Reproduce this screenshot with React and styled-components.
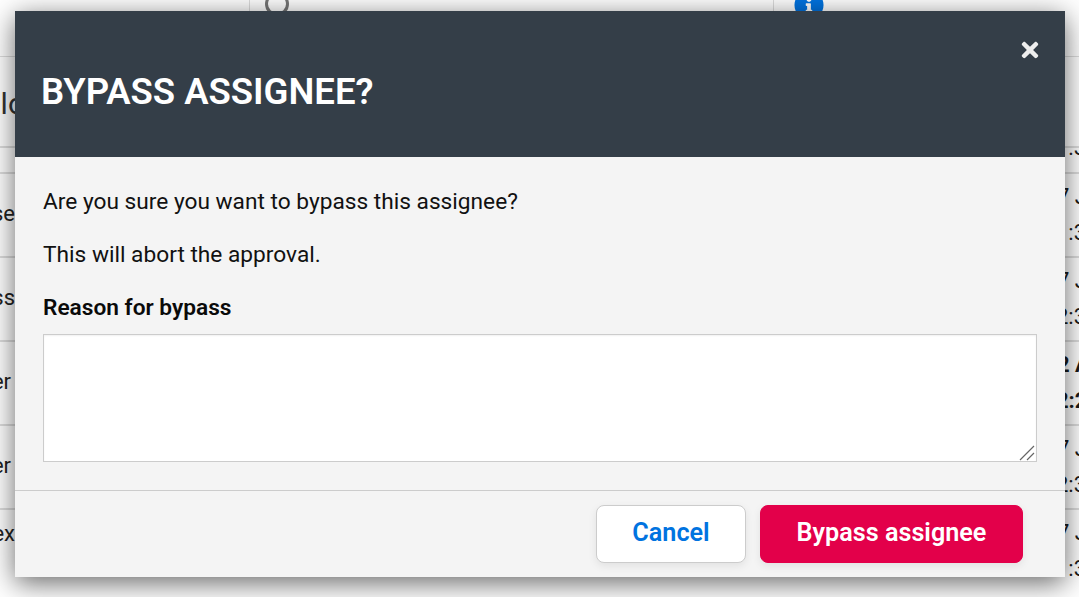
import React from "react";
import styled, { createGlobalStyle } from "styled-components";
import { FaTimes, FaInfoCircle } from "react-icons/fa";

const Global = createGlobalStyle`
  html, body {
    margin: 0;
    padding: 0;
    height: 100%;
    overflow: hidden;
    background: #fff;
    font-family: Roboto, "Liberation Sans", sans-serif;
  }
  * { box-sizing: border-box; }
`;

const Page = styled.div`
  position: relative;
  width: 1079px;
  height: 597px;
  overflow: hidden;
  background: #fff;
  color: #222;
`;

const TopBar = styled.div`
  height: 57px;
  display: flex;
  border-bottom: 1px solid #ddd;
`;

const TopCell = styled.div`
  width: ${(p) => p.$width}px;
  flex: ${(p) => (p.$grow ? 1 : "none")};
  border-right: ${(p) => (p.$line ? "1px solid #ddd" : "none")};
  padding-left: ${(p) => p.$pad || 0}px;
`;

const SearchRing = styled.div`
  width: 24px;
  height: 24px;
  margin-top: -8px;
  border: 3px solid #767676;
  border-radius: 50%;
`;

const Info = styled(FaInfoCircle)`
  display: block;
  width: 30px;
  height: 30px;
  margin-top: -10px;
  color: #0073e0;
`;

const Heading = styled.div`
  height: 89px;
  width: 25px;
  display: flex;
  align-items: center;
  justify-content: flex-end;
  overflow: hidden;
  font-size: 30px;
  white-space: nowrap;
  color: #333;
  padding-top: 4px;
`;

const Row = styled.div`
  height: ${(p) => p.$height}px;
  display: flex;
  justify-content: space-between;
  align-items: center;
  border-top: 2px solid #ddd;
  font-size: 22px;
  font-weight: ${(p) => (p.$bold ? 700 : 400)};
`;

const Name = styled.div`
  width: 15px;
  display: flex;
  justify-content: flex-end;
  overflow: hidden;
  white-space: nowrap;
  font-weight: 400;
  padding-right: ${(p) => p.$end || 0}px;
  padding-bottom: ${(p) => (p.$firstLine ? 36 : 4)}px;
`;

const When = styled.div`
  width: 23px;
  line-height: 36px;
  white-space: nowrap;
  overflow: hidden;
  color: #1a1a1a;
`;

const Day = styled.div`
  padding-left: 1px;
`;

const CutTime = styled.div`
  align-self: flex-start;
  width: 23px;
  height: 8px;
  display: flex;
  align-items: flex-end;
  overflow: hidden;
  line-height: 16px;
  white-space: nowrap;
  color: #1a1a1a;
`;

const Modal = styled.div`
  position: absolute;
  left: 15px;
  top: 11px;
  width: 1050px;
  height: 566px;
  display: flex;
  flex-direction: column;
  background: #f4f4f4;
  box-shadow: 0 6px 26px rgba(0, 0, 0, 0.6);
`;

const Header = styled.div`
  position: relative;
  height: 146px;
  flex: none;
  display: flex;
  align-items: center;
  padding: 16px 26px 0;
  background: #343e48;
`;

const Title = styled.h2`
  margin: 0;
  color: #fff;
  font-size: 36.5px;
  font-weight: 600;
  line-height: 1;
`;

const Close = styled.button`
  position: absolute;
  top: 27px;
  right: 23px;
  padding: 0;
  display: flex;
  border: 0;
  background: none;
  color: #eee;
`;

const Body = styled.div`
  flex: 1;
  padding: 33px 28px 0 28px;
`;

const Text = styled.p`
  margin: 0 0 29px;
  font-size: 22.7px;
  line-height: 24px;
  color: #111;
`;

const Label = styled.label`
  display: block;
  margin: 0 0 14px;
  font-size: 22.7px;
  font-weight: 600;
  line-height: 24px;
  color: #0a0a0a;
`;

const AreaWrap = styled.div`
  position: relative;
`;

const Area = styled.textarea`
  display: block;
  width: 100%;
  height: 128px;
  border: 1px solid #ccc;
  border-radius: 0;
  background: #fff;
  outline: none;
  resize: none;
  box-shadow: inset 0 1px 2px rgba(0, 0, 0, 0.06);
`;

const Grip = styled.svg`
  position: absolute;
  right: 2px;
  bottom: 1px;
  width: 16px;
  height: 16px;
  stroke: #666;
  stroke-width: 1.2;
`;

const Footer = styled.div`
  height: 87px;
  flex: none;
  display: flex;
  justify-content: flex-end;
  align-items: flex-start;
  gap: 14px;
  padding: 14px 42px 0 0;
  border-top: 1px solid #ccc;
`;

const Button = styled.button`
  height: 58px;
  width: ${(p) => p.$width}px;
  padding: 0 0 3px;
  border: 1px solid ${(p) => (p.$danger ? "#e3004a" : "#ccc")};
  border-radius: 8px;
  background: ${(p) => (p.$danger ? "#e3004a" : "#fff")};
  color: ${(p) => (p.$danger ? "#fff" : "#0073e0")};
  font-family: Roboto, "Liberation Sans", sans-serif;
  font-size: 25.2px;
  font-weight: 600;
  box-shadow: 0 3px 8px rgba(0, 0, 0, 0.08);
`;

const rows = [
  { name: "Release", day: "7 Jun", time: "1:30", bold: false },
  { name: "Process", day: "7 Jun", time: "2:30", bold: false },
  { name: "Paper", day: "2 Aug", time: "2:20", bold: true, end: 4 },
  { name: "Paper", day: "7 Jun", time: "2:30", bold: false, end: 4 },
  { name: "Index", day: "7 Jun", time: "1:30", bold: false, firstLine: true },
];

export default function App() {
  return (
    <Page>
      <Global />
      <TopBar>
        <TopCell $width={250} $line />
        <TopCell $width={524} $line $pad={15}>
          <SearchRing />
        </TopCell>
        <TopCell $grow $pad={20}>
          <Info />
        </TopCell>
      </TopBar>
      <Heading>Blo</Heading>
      <Row $height={26}>
        <span />
        <CutTime>1:30</CutTime>
      </Row>
      {rows.map((r, i) => (
        <Row key={i} $height={84} $bold={r.bold}>
          <Name $firstLine={r.firstLine} $end={r.end}>
            {r.name}
          </Name>
          <When>
            <Day>{r.day}</Day>
            {r.time}
          </When>
        </Row>
      ))}
      <Modal>
        <Header>
          <Title>BYPASS ASSIGNEE?</Title>
          <Close aria-label="Close">
            <FaTimes size={24} />
          </Close>
        </Header>
        <Body>
          <Text>Are you sure you want to bypass this assignee?</Text>
          <Text>This will abort the approval.</Text>
          <Label>Reason for bypass</Label>
          <AreaWrap>
            <Area />
            <Grip viewBox="0 0 16 16">
              <path d="M1 15L15 1M8 15L15 8" />
            </Grip>
          </AreaWrap>
        </Body>
        <Footer>
          <Button $width={150}>Cancel</Button>
          <Button $width={263} $danger>
            Bypass assignee
          </Button>
        </Footer>
      </Modal>
    </Page>
  );
}
